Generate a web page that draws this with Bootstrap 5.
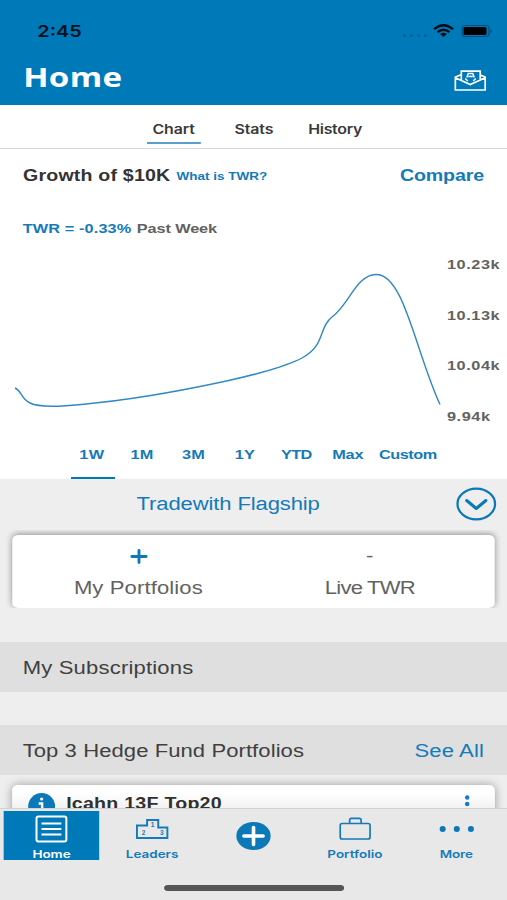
<!DOCTYPE html>
<html lang="en">
<head>
<meta charset="utf-8">
<meta name="viewport" content="width=device-width, initial-scale=1">
<title>Home</title>
<link href="https://cdn.jsdelivr.net/npm/bootstrap@5.3.0/dist/css/bootstrap.min.css" rel="stylesheet">
<style>
:root{--brand:#0079b8;--sx:1.224638}
html,body{margin:0;height:900px;overflow:hidden;background:#eee}
body{font-family:"Liberation Sans",Arial,sans-serif;color:#404040;line-height:1}
/* 414pt wide layout stretched across the viewport; svg viewBoxes use stretched units */
.stage{width:414px;height:900px;transform:scaleX(var(--sx));transform-origin:0 0;overflow:hidden;background:#eee;position:relative}
.stage span{white-space:nowrap;line-height:20px;display:block}
.blue{color:#147ab8}
.gray{color:#626262}
svg{display:block;flex:none;overflow:visible}
.top-bar{height:105px;background:var(--brand)}
.status{height:62px;padding:0 11px 0 30.5px}
.clock{font:600 16.2px/20px Inter,sans-serif;color:#04111b}
.title-row{height:43px;padding:0 17.5px 0 19px}
.stage .title{font:700 27px/29px "Open Sans",sans-serif;color:#fff;letter-spacing:.25px}
.tabs-row{height:44px;border-bottom:1px solid #d9d9d9;padding-left:119.5px;background:#fff}
.tabs-row .tab{height:39px;padding:14px 5px 0;border-bottom:2px solid transparent;font:600 13px/20px Inter,sans-serif;color:#3a3a3a;letter-spacing:-.1px}
.tabs-row .tab.on{border-color:#5a9fcb;width:44px}
.b16{font-size:16px;font-weight:700;letter-spacing:.15px}
.b13{font-size:13.3px;font-weight:700;letter-spacing:.1px}
.b11{font-size:11px;font-weight:700;letter-spacing:.02px}
.r18{font-size:18px;letter-spacing:.1px}
.panel{height:330px;background:#fff}
.growth{height:52px;padding:1px 18.8px 0}
.twr{height:54px;padding:1px 0 0 18.5px;gap:4.5px}
.yaxis{height:172px;padding:0 6px 0 0}
.yaxis span{height:20px;letter-spacing:.45px}
.plot{width:365px;height:176px}
.range{height:48px;padding-left:58px}
.range .cell{height:48px;padding-top:14px;border-bottom:2.5px solid transparent;width:42px}
.range .cell.on{border-color:var(--brand);width:36px;margin-right:1px}
.range .cell.on span{margin-left:-2px}
.flag{height:56px;padding:0 9px 7px 111.5px}
.sheet{margin:0 10px;background:#fff;border-radius:5px}
.clip-top{padding-top:5px;margin-top:-5px;height:78px;overflow:hidden}
.pair{height:73px;box-shadow:0 -1px 6px rgba(0,0,0,.4)}
.pair>div{width:50%;padding-top:9px}
.gap-a{height:34px}.gap-b{height:33px}
.band{height:50px;background:#dfdfdf;padding:1px 18.8px 0 18.5px}
.fund{height:60px;margin-top:10px;box-shadow:0 0 9px rgba(0,0,0,.35);padding:8px 20.5px 0 13px;gap:9px;background:linear-gradient(#fff 8px,#f1f1f1 24px)}
.fund .name{color:#303030;padding-top:1px;letter-spacing:.2px}
.dock{position:absolute;left:0;right:0;bottom:0;height:92px;background:#e8e8e8;border-top:1px solid #d2d2d2}
.dock .item{width:82.8px;height:49px;margin-top:2px;font:600 11px/14px Inter,sans-serif;color:#147ab8}
.dock .item span{line-height:12px;margin-top:auto}
.dock .item.on{background:var(--brand);color:#fff;width:78.6px;margin-left:2.8px;margin-right:1.4px}
.indicator{width:147px;height:6px;border-radius:3px;background:#555;margin:25px auto 0}
</style>
</head>
<body>
<main class="stage">
<header class="top-bar">
 <div class="status d-flex align-items-center justify-content-between"><span class="clock">2:45</span>
  <svg width="76" height="16" viewBox="0 0 93 16" preserveAspectRatio="none">
   <g fill="#07609a"><circle cx="4" cy="12.5" r="1.6"/><circle cx="11" cy="12.5" r="1.6"/><circle cx="18" cy="12.5" r="1.6"/><circle cx="25" cy="12.5" r="1.6"/></g>
   <g fill="none" stroke="#020d16" stroke-width="2.3"><path d="M33.5 6.2Q43 -1.8 52.5 6.2"/><path d="M37 9.2Q43 4.2 49 9.2"/></g><path d="M39.6 10.9Q43 8.4 46.4 10.9L43 14Z" fill="#020d16"/>
   <rect x="61.5" y="2.5" width="27" height="11" rx="3" fill="none" stroke="#07507f" stroke-width="1.2"/><rect x="63" y="4" width="23" height="8" rx="1.5" fill="#000"/><path d="M90 6q3 2 0 4z" fill="#07507f"/>
  </svg></div>
 <div class="title-row d-flex justify-content-between"><span class="title">Home</span>
  <svg width="26" height="22" viewBox="0 0 32 22" preserveAspectRatio="none" style="margin-top:8px" fill="none" stroke="#fff" stroke-width="1.7"><path d="M7 5H6L1 7V20H31V7L26 5M1.5 8L16 14.500L30.5 8M7 10.500V1.200H26V10.500"/><path d="M12.500 7.500L14 3.500H18.500L20 7.500M14 6.500H18.500M11 8.500L13.500 11M21.500 8.500L19 11" stroke-width="1.500"/></svg></div>
</header>
<nav class="tabs-row d-flex"><div class="tab on"><span>Chart</span></div><div class="tab" style="margin-left:23px"><span>Stats</span></div><div class="tab" style="margin-left:18.5px"><span style="letter-spacing:-.25px">History</span></div></nav>
<section class="panel">
 <div class="growth d-flex align-items-center"><span class="b16" style="color:#333">Growth of $10K</span><span class="b11 blue" style="margin-left:5px">What is TWR?</span><span class="b16 blue ms-auto" style="letter-spacing:-.1px">Compare</span></div>
 <div class="twr d-flex align-items-center"><span class="b13 blue">TWR = -0.33%</span><span class="b13 gray" style="letter-spacing:-.1px">Past Week</span></div>
 <div class="d-flex">
  <svg class="plot" viewBox="0 255 447 176" preserveAspectRatio="none" fill="none" stroke="#3089c2" stroke-width="1.4"><path d="M15 388C22 391 21 399 30 403C38 407 54 406.500 66 405.700C110 402.500 158 395 200 386.500C244 378 285 367 302 358C326 345 318 328 332 317C349 305 356 275 376 274.500C404 274 415 350 440 404.500"/></svg>
  <div class="yaxis d-flex flex-column justify-content-between b13 gray"><span>10.23k</span><span>10.13k</span><span>10.04k</span><span>9.94k</span></div>
 </div>
 <div class="range d-flex b13 blue text-center"><div class="cell on"><span style="letter-spacing:.3px">1W</span></div><div class="cell"><span>1M</span></div><div class="cell"><span>3M</span></div><div class="cell"><span>1Y</span></div><div class="cell"><span style="letter-spacing:-.5px">YTD</span></div><div class="cell"><span style="letter-spacing:-.1px">Max</span></div><div class="cell" style="width:56px"><span style="letter-spacing:-.4px">Custom</span></div></div>
</section>
<div class="flag d-flex align-items-center justify-content-between"><span class="r18 blue" style="letter-spacing:-.1px">Tradewith Flagship</span>
 <svg width="33" height="34" viewBox="0 0 40 34" preserveAspectRatio="none" fill="none" stroke="#0b79b7"><ellipse cx="20.500" cy="17" rx="18.600" ry="15.300" stroke-width="2.200"/><path d="M11 13.500L20.500 21.500L30 13.500" stroke-width="3" stroke-linecap="round" stroke-linejoin="round"/></svg></div>
<div class="clip-top"><div class="sheet pair d-flex text-center">
 <div style="padding-left:9px"><svg class="mx-auto" width="15" height="26" viewBox="0 0 18 26" preserveAspectRatio="none" stroke="#0b79b7" stroke-width="2.800" stroke-linecap="round"><path d="M2 12.500H16M9 6.500V18.500"/></svg><span class="r18 gray" style="margin-top:8px">My Portfolios</span></div>
 <div style="padding-right:7px"><span class="r18 gray" style="height:26px;line-height:24px">-</span><span class="r18 gray" style="margin-top:8px;letter-spacing:-.65px">Live TWR</span></div>
</div></div>
<div class="gap-a"></div>
<div class="band d-flex align-items-center"><span class="r18" style="letter-spacing:.15px">My Subscriptions</span></div>
<div class="gap-b"></div>
<div class="band d-flex align-items-center justify-content-between"><span class="r18" style="letter-spacing:.06px">Top 3 Hedge Fund Portfolios</span><span class="r18 blue">See All</span></div>
<div class="sheet fund d-flex">
 <svg width="22" height="27" viewBox="0 0 27 27" preserveAspectRatio="none"><circle cx="13.500" cy="13.500" r="13.500" fill="#0b79b7"/><circle cx="13.500" cy="6" r="1.600" fill="#fff"/><path d="M10.500 10.500H14V20" stroke="#fff" stroke-width="2.400" fill="none"/></svg>
 <span class="b16 name">Icahn 13F Top20</span>
 <svg class="ms-auto" width="5" height="26" viewBox="0 0 6 26" preserveAspectRatio="none" fill="#1976d2"><circle cx="3" cy="4.500" r="2.200"/><circle cx="3" cy="11" r="2.200"/><circle cx="3" cy="17.500" r="2.200"/></svg>
</div>
<footer class="dock">
 <div class="d-flex">
  <div class="item on d-flex flex-column align-items-center"><svg width="26" height="28" viewBox="0 0 32 28" preserveAspectRatio="none" style="margin-top:4px" fill="none" stroke="#fff" stroke-width="2"><rect x="1" y="1.500" width="30" height="25" rx="2"/><path d="M6 8.500H26M6 14H26M6 19.500H26"/></svg><span>Home</span></div>
  <div class="item d-flex flex-column align-items-center"><svg width="26.500" height="20" viewBox="0 0 32 20" preserveAspectRatio="none" style="margin-top:8px" fill="none" stroke="#147ab8" stroke-width="1.900"><path d="M1 19V6.500H11V1H22V8.500H31V19Z"/><g fill="#147ab8" stroke="none" font-family="Liberation Sans" font-size="6.500" font-weight="700" text-anchor="middle"><text x="16.500" y="8.500">1</text><text x="7.500" y="16">2</text><text x="25.500" y="16">3</text></g></svg><span>Leaders</span></div>
  <div class="item d-flex flex-column align-items-center"><svg width="28" height="28" viewBox="0 0 34 28" preserveAspectRatio="none" style="margin-top:10.500px"><ellipse cx="17" cy="14" rx="17" ry="14" fill="#0b79b7"/><path d="M7.500 14H26.500M17 5.500V22.500" stroke="#fff" stroke-width="3.600" stroke-linecap="round"/></svg></div>
  <div class="item d-flex flex-column align-items-center"><svg width="26" height="23" viewBox="0 0 32 23" preserveAspectRatio="none" style="margin-top:6px" fill="none" stroke="#147ab8" stroke-width="1.700"><rect x="1" y="6.500" width="30" height="15.500" rx="2"/><path d="M10.500 6.500V3Q10.500 1.300 12 1.300H20Q22 1.300 22 3V6.500"/></svg><span>Portfolio</span></div>
  <div class="item d-flex flex-column align-items-center"><svg width="28" height="8" viewBox="0 0 34 8" preserveAspectRatio="none" style="margin-top:14px" fill="#0b79b7"><circle cx="3" cy="4" r="3"/><circle cx="17" cy="4" r="3"/><circle cx="31" cy="4" r="3"/></svg><span style="letter-spacing:-.1px">More</span></div>
 </div>
 <div class="indicator"></div>
</footer>
</main>
<script src="https://cdn.jsdelivr.net/npm/bootstrap@5.3.0/dist/js/bootstrap.bundle.min.js"></script>
</body>
</html>
